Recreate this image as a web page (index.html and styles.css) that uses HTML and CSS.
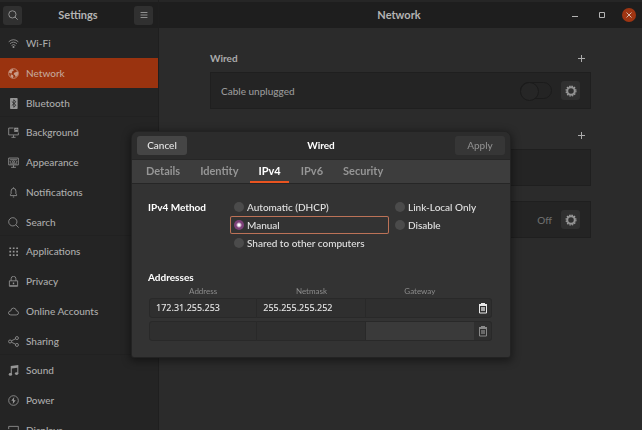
FILE: index.html
```html
<!DOCTYPE html>
<html lang="en">
<head>
<meta charset="utf-8">
<title>Settings</title>
<link rel="stylesheet" href="styles.css">
</head>
<body>
<div class="window">
  <aside class="sidebar">
    <header class="bar">
      <button class="tool" aria-label="Search settings"><svg viewBox="0 0 16 16"><circle cx="7" cy="7" r="5.8"/><path d="M11 11l4.500 4.500"/></svg></button>
      <h1>Settings</h1>
      <button class="tool" aria-label="Menu"><svg viewBox="0 0 16 16"><path d="M2.500 4h11M2.500 8h11M2.500 12h11"/></svg></button>
    </header>
    <nav>
      <div class="group">
        <a class="item" href="#wifi"><svg viewBox="0 0 16 16"><path d="M1 5.500q7-6 14 0M3 8.300q5-4.500 10 0M5.200 10.800q2.800-2.500 5.600 0"/><circle class="fill" cx="8" cy="13.200" r="1.500"/></svg>Wi-Fi</a>
        <a class="item active" href="#network" aria-current="page"><svg viewBox="0 0 16 16"><circle cx="8" cy="8" r="7"/><path class="fill" d="M3 3l4-1.500 1.500 2-3 2 .5 2-2 .5-3-2zM9 7l4-1.500L12 3l3 4-1 4-3 2-1-3-2-1zM4 9l3 1 1 2-1 3-3-2z"/></svg>Network</a>
        <a class="item" href="#bluetooth"><svg viewBox="0 0 16 16"><rect class="fill" x="3" y="0" width="11" height="16" rx="1"/><path class="cut" d="M5.500 5l6 5.500-3 3v-11l3 3-6 5.500"/></svg>Bluetooth</a>
      </div>
      <div class="group">
        <a class="item" href="#background"><svg viewBox="0 0 16 16"><path d="M8 1.500H1v10h14V8M8 12v3M5 15h6"/><path class="fill" d="M9 1h6v6H9z"/><path class="cut" d="M10 5l2-2 2 1"/></svg>Background</a>
        <a class="item" href="#appearance"><svg viewBox="0 0 16 16"><path d="M1 1.500h14v10H1zM8 12v3M4.500 15h7M3 4h10M4.500 5.500L3 7l1.500 1.500M11.500 5.500L13 7l-1.500 1.500M3 10h10"/><circle cx="8" cy="7" r="1.500"/></svg>Appearance</a>
        <a class="item" href="#notifications"><svg viewBox="0 0 16 16"><path d="M3.500 12.500V11l1-1V6q0-4 3.500-4t3.500 4v4l1 1v1.500zM8 .500V2M7 14.500h2"/></svg>Notifications</a>
        <a class="item" href="#search"><svg viewBox="0 0 16 16"><circle cx="7" cy="7" r="6"/><path d="M11.500 11.500l4 4"/></svg>Search</a>
      </div>
      <div class="group">
        <a class="item" href="#applications"><svg viewBox="0 0 16 16"><path class="fill" d="M2 2h2.500v2.500H2zM7 2h2.500v2.500H7zM12 2h2.500v2.500H12zM2 7h2.500v2.500H2zM7 7h2.500v2.500H7zM12 7h2.500v2.500H12zM2 12h2.500v2.500H2zM7 12h2.500v2.500H7zM12 12h2.500v2.500H12z"/></svg>Applications</a>
        <a class="item" href="#privacy"><svg viewBox="0 0 16 16"><path d="M2 7h12v8H2zM4.500 7V4q0-3.500 3.500-3.500T11.500 4v3M2.500 14h11"/><path class="fill" d="M7 9.500h2V12H7z"/></svg>Privacy</a>
        <a class="item" href="#accounts"><svg viewBox="0 0 16 16"><path d="M4 13q-3.300-.3-3.300-3T4 7.200Q4.500 3 8 3t4.300 4q3 .3 3 3T12 13z"/></svg>Online Accounts</a>
        <a class="item" href="#sharing"><svg viewBox="0 0 16 16"><circle cx="3" cy="8" r="2.200"/><circle cx="13" cy="3" r="2.200"/><circle cx="13" cy="13" r="2.200"/><path d="M5 7l6-3M5 9l6 3"/></svg>Sharing</a>
      </div>
      <div class="group">
        <a class="item" href="#sound"><svg viewBox="0 0 16 16"><path class="fill" d="M4 1.500L15 0v12.500h-1.500V4l-8 1v9.500H4z"/><ellipse class="fill" cx="3.500" cy="13.800" rx="2.500" ry="2"/><ellipse class="fill" cx="12.500" cy="12.500" rx="2.500" ry="2"/></svg>Sound</a>
        <a class="item" href="#power"><svg viewBox="0 0 16 16"><circle cx="8" cy="8" r="7"/><path class="fill" d="M9 3L4.800 8.500h2.500L7 13l4.200-5.500H8.700z"/></svg>Power</a>
        <a class="item" href="#displays"><svg viewBox="0 0 16 16"><path d="M1 6V2h14v11h-5M1 8q6 0 7 7M1 11q3.500 0 4 4"/><path class="fill" d="M1 13q2 0 2 2H1z"/></svg>Displays</a>
      </div>
    </nav>
  </aside>
  <main class="main">
    <header class="bar">
      <h2>Network</h2>
      <div class="controls">
        <button aria-label="Minimize"><svg viewBox="0 0 10 10"><path d="M2 6.500h6"/></svg></button>
        <button aria-label="Maximize"><svg viewBox="0 0 10 10"><path d="M2.500 2.500h5v5h-5z"/></svg></button>
        <button class="close" aria-label="Close"><svg viewBox="0 0 10 10"><path d="M2.500 2.500l5 5M7.500 2.500l-5 5"/></svg></button>
      </div>
    </header>
    <div class="content">
      <section>
        <div class="heading"><h3>Wired</h3><button class="add" aria-label="Add wired profile"><svg viewBox="0 0 9 9"><path d="M4.500 1v7M1 4.500h7"/></svg></button></div>
        <div class="card">
          <span>Cable unplugged</span>
          <input class="switch" type="checkbox" role="switch" aria-label="Wired connection">
          <button class="tool gear" aria-label="Wired options"><svg viewBox="0 0 16 16"><circle class="teeth" cx="8" cy="8" r="6.600"/><circle class="ring" cx="8" cy="8" r="5"/></svg></button>
        </div>
      </section>
      <section>
        <div class="heading"><button class="add" aria-label="Add VPN"><svg viewBox="0 0 9 9"><path d="M4.500 1v7M1 4.500h7"/></svg></button></div>
        <div class="card"></div>
      </section>
      <section class="card">
        <span></span>
        <span class="state">Off</span>
        <button class="tool gear" aria-label="Proxy options"><svg viewBox="0 0 16 16"><circle class="teeth" cx="8" cy="8" r="6.600"/><circle class="ring" cx="8" cy="8" r="5"/></svg></button>
      </section>
    </div>
  </main>
</div>
<div class="overlay">
  <form class="dialog" role="dialog" aria-labelledby="dialog-title">
    <header class="dialog-bar">
      <button class="action" type="button">Cancel</button>
      <h2 id="dialog-title">Wired</h2>
      <button class="action" type="button" disabled>Apply</button>
    </header>
    <nav class="tabs">
      <a href="#details">Details</a>
      <a href="#identity">Identity</a>
      <a class="current" href="#ipv4" aria-current="page">IPv4</a>
      <a href="#ipv6">IPv6</a>
      <a href="#security">Security</a>
    </nav>
    <div class="page">
      <div class="method" role="radiogroup" aria-labelledby="method">
        <h3 id="method">IPv4 Method</h3>
        <label><input type="radio" name="method">Automatic (DHCP)</label>
        <label><input type="radio" name="method">Link-Local Only</label>
        <label class="focus"><input type="radio" name="method" checked>Manual</label>
        <label><input type="radio" name="method">Disable</label>
        <label><input type="radio" name="method">Shared to other computers</label>
      </div>
      <h3>Addresses</h3>
      <table class="addresses">
        <thead><tr><th scope="col">Address</th><th scope="col">Netmask</th><th scope="col">Gateway</th><td class="end"></td></tr></thead>
        <tbody>
          <tr>
            <td><input aria-label="Address 1" value="172.31.255.253"></td>
            <td><input aria-label="Netmask 1" value="255.255.255.252"></td>
            <td><input aria-label="Gateway 1"></td>
            <td><button class="trash" type="button" aria-label="Delete address 1"><svg viewBox="0 0 10 12"><path d="M1 2h2V1h4v1h2v2H1z"/><path class="can" d="M1.500 4v7h7V4"/><path class="inner" d="M3 5h4v4H3z"/></svg></button></td>
          </tr>
          <tr>
            <td><input aria-label="Address 2"></td>
            <td><input aria-label="Netmask 2"></td>
            <td><input class="light" aria-label="Gateway 2"></td>
            <td><button class="trash" type="button" disabled aria-label="Delete address 2"><svg viewBox="0 0 10 12"><path d="M1 2h2V1h4v1h2v2H1z"/><path class="can" d="M1.500 4v7h7V4"/><path class="inner" d="M3 5h4v4H3z"/></svg></button></td>
          </tr>
        </tbody>
      </table>
    </div>
  </form>
</div>
</body>
</html>
```
FILE: styles.css
```css
* { box-sizing: border-box; }
body {
  margin: 0;
  overflow: hidden;
  background: #2b2b2b;
  color: #acacac;
  font: 500 10px/14px Lato, "Noto Sans", sans-serif;
}
h1, h2, h3 { margin: 0; font-size: 11px; line-height: 14px; font-weight: 700; }
h3 { font-size: 10px; }
button, input { margin: 0; font: inherit; color: inherit; }
button { padding: 0; border: 0; background: none; }
a { color: inherit; text-decoration: none; }
svg { display: block; fill: none; stroke: currentColor; }
.fill { fill: currentColor; stroke: none; }
.cut { stroke: #242424; }

.window { display: flex; height: 100vh; overflow: hidden; }
.bar {
  display: flex;
  align-items: center;
  justify-content: space-between;
  height: 28px;
  padding: 0 5px 0 3px;
  border-top: 2px solid #262626;
  background: #1e1e1e;
  color: #b4b4b4;
}
.sidebar { flex: 0 0 159px; background: #242424; border-right: 1px solid #1f1f1f; }
.sidebar svg { color: #969696; }
.tool {
  display: grid;
  place-items: center;
  width: 19px;
  height: 19px;
  border-radius: 3px;
  background: #303030;
}
.tool svg { width: 10px; height: 10px; stroke-width: 1.5; }

.group { margin-bottom: -1px; }
.item { display: flex; align-items: center; gap: 7px; height: 30px; padding-left: 8px; }
.item svg { width: 11px; height: 11px; stroke-width: 1.2; }
.group + .group { box-shadow: 0 -1px #212121; }
.active { background: #9a330f; color: #c4a598; }
.sidebar .active svg { color: #c99b88; }

.main { flex: 1; min-width: 0; }
.main .bar { display: grid; grid-template-columns: 1fr auto 1fr; padding-right: 6px; }
.main .bar h2 { grid-column: 2; }
.controls { display: flex; justify-content: flex-end; gap: 13px; }
.controls button { display: grid; place-items: center; width: 14px; height: 14px; border-radius: 50%; }
.controls svg { width: 10px; height: 10px; }
.controls .close { background: #9f3512; color: #d5b9ad; }
.content { max-width: 381px; margin: 0 auto; padding-top: 19px; }
.content section { margin-bottom: 15px; }
.heading { display: flex; align-items: center; height: 22px; margin-bottom: 3px; }
.heading .add { margin: 0 5px 0 auto; }
.add svg { width: 9px; height: 9px; }
.card {
  display: flex;
  align-items: center;
  gap: 9px;
  height: 37px;
  padding: 0 10px;
  border: 1px solid #1f1f1f;
  background: #242424;
  color: #9a9a9a;
}
.card span:first-child { flex: 1; }
.state { color: #6d6d6d; }
.switch {
  appearance: none;
  width: 32px;
  height: 17px;
  border: 1px solid #1b1b1b;
  border-radius: 9px;
}
.switch::before {
  content: "";
  display: block;
  width: 17px;
  height: 17px;
  margin: -1px;
  border: 1px solid #1b1b1b;
  border-radius: 50%;
  background: #262626;
}
.gear svg { width: 12px; height: 12px; }
.teeth { stroke: #a0a0a0; stroke-width: 1.5; stroke-dasharray: 2 1.45; }
.ring { stroke: #949494; stroke-width: 2.6; }

.overlay { position: fixed; inset: 0; display: grid; place-items: center; padding-top: 58px; }
.dialog {
  width: min(378px, 100%);
  border-radius: 6px 6px 2px 2px;
  background: #333;
  color: #e2e2e2;
  box-shadow: 0 0 0 1px #232323, 0 2px 8px 2px rgba(0, 0, 0, .45);
  overflow: hidden;
}
.dialog-bar {
  display: flex;
  align-items: center;
  justify-content: space-between;
  height: 27px;
  padding: 0 5px;
  background: #2c2c2c;
  color: #fff;
}
.dialog-bar h2 { font-size: 10px; }
.action { width: 50px; height: 19px; border-radius: 3px; background: #454545; color: #e6e6e6; }
.action:disabled { background: #363636; color: #8d8d8d; }
.tabs {
  display: flex;
  gap: 4px;
  height: 25px;
  padding: 0 6px;
  border: solid #262626;
  border-width: 1px 0;
  background: #3d3d3d;
  color: #969696;
  font-size: 11px;
  font-weight: 700;
}
.tabs a { padding: 4px 8px; border-bottom: 2px solid transparent; }
.tabs .current { border-color: #e95420; color: #fff; }
.page { padding: 14px 16px 13px; }
.page h3 { color: #fff; }
.method {
  display: grid;
  grid-template-columns: 82px 159px 1fr;
  align-items: center;
  margin-bottom: 18px;
}
.method h3 { grid-row: 1 / 2; }
.method label { display: flex; align-items: center; gap: 3px; height: 18px; padding-left: 4px; }
.method label:nth-of-type(odd) { grid-column: 2; }
.method label:nth-of-type(even) { margin-left: 2px; }
.focus { box-shadow: inset 0 0 0 1px #bc7257; border-radius: 2px; }
.method input { appearance: none; width: 10px; height: 10px; border-radius: 50%; background: #4b4b4b; }
.method input:checked { background: radial-gradient(circle, #fff 1px, #7d4079 3px); }

.addresses { width: 343px; margin-left: 1px; border-collapse: separate; border-spacing: 0 3px; table-layout: fixed; }
.addresses th, .addresses .end { height: 8px; padding: 0; font-size: 8px; line-height: 8px; font-weight: 400; color: #8c8c8c; }
.end { width: 18px; }
.addresses tbody td { height: 20px; padding: 0; border: 1px solid #292929; border-left-width: 0; background: #2f2f2f; }
.addresses tbody td:first-child { border-left-width: 1px; border-radius: 3px 0 0 3px; }
.addresses tbody td:nth-child(3) { border-right: 0; }
.addresses tbody td:last-child { border-radius: 0 3px 3px 0; }
.addresses input {
  display: block;
  width: 100%;
  height: 18px;
  padding: 0 6px;
  border: 0;
  outline: 0;
  background: none;
  font: 500 9px "Noto Sans", sans-serif;
}
.addresses .light { background: #3a3a3a; }
.trash { display: grid; place-items: center; width: 100%; height: 18px; color: #e8e8e8; }
.trash:disabled { color: #898989; }
.trash svg { width: 10px; height: 12px; fill: currentColor; stroke: none; }
.trash .can { fill: none; stroke: currentColor; }
.trash .inner { opacity: .65; }
```
